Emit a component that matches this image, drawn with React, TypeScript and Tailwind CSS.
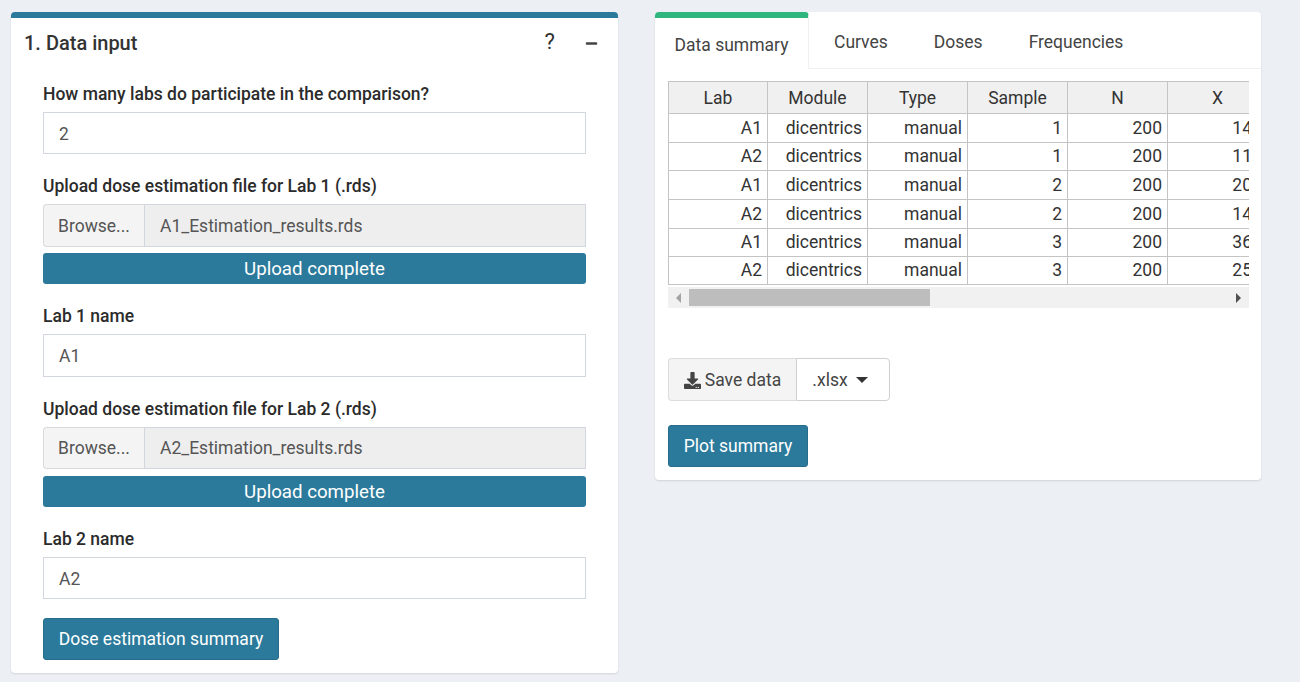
import { FaDownload, FaMinus } from 'react-icons/fa';

const rows = [
  ['A1', 'dicentrics', 'manual', '1', '200', '14'],
  ['A2', 'dicentrics', 'manual', '1', '200', '11'],
  ['A1', 'dicentrics', 'manual', '2', '200', '20'],
  ['A2', 'dicentrics', 'manual', '2', '200', '14'],
  ['A1', 'dicentrics', 'manual', '3', '200', '36'],
  ['A2', 'dicentrics', 'manual', '3', '200', '25'],
];

const columns = ['Lab', 'Module', 'Type', 'Sample', 'N', 'X'];
const rowHeights = ['h-[29px]', 'h-[28px]', 'h-[29px]', 'h-[29px]', 'h-[28px]', 'h-[28px]'];

function Label({ children }: { children: string }) {
  return <div className="mb-2 h-[22px] text-[17.5px] leading-[24px] font-medium text-[#2b2b2b]">{children}</div>;
}

function TextField({ value, height }: { value: string; height: string }) {
  return (
    <div className={`${height} flex items-center border border-[#d2d6de] bg-white px-[15px] pt-[2px] text-[17.5px] text-[#555]`}>
      {value}
    </div>
  );
}

function FileField({ name, height }: { name: string; height: string }) {
  return (
    <div className={`${height} flex text-[17.5px] text-[#555]`}>
      <div className="flex w-[101px] items-center justify-center rounded-l border border-r-0 border-[#d9d9d9] bg-[#f4f4f4] pt-px">
        Browse...
      </div>
      <div className="flex flex-1 items-center border border-[#d2d6de] bg-[#eeeeee] px-[15px] pt-px">{name}</div>
    </div>
  );
}

function Progress() {
  return (
    <div className="mt-[6px] flex h-[31px] items-center justify-center rounded-[3px] bg-[#2b7a9b] pt-px text-[18.7px] text-white">
      Upload complete
    </div>
  );
}

export default function App() {
  return (
    <div className="flex h-[682px] items-start gap-[37px] overflow-hidden bg-[#ecf0f5] pt-3 pl-[11px] font-['Roboto',sans-serif]">
      <section className="h-[661px] w-[607px] rounded-[4px] border-t-[6px] border-[#2b7a9b] bg-white shadow-[0_1px_2px_rgba(0,0,0,0.12)]">
        <header className="flex h-[50px] items-center justify-between pr-[20px] pl-[13px] text-[#333]">
          <h3 className="text-[20px] font-medium">1. Data input</h3>
          <div className="flex items-center gap-[30px]">
            <span className="pb-[4px] text-[22px]">?</span>
            <FaMinus className="text-[13px] text-[#444]" />
          </div>
        </header>

        <div className="px-[32px] pt-[14px]">
          <Label>How many labs do participate in the comparison?</Label>
          <TextField value="2" height="h-[42px]" />

          <div className="mt-5">
            <Label>Upload dose estimation file for Lab 1 (.rds)</Label>
            <FileField name="A1_Estimation_results.rds" height="h-[43px]" />
            <Progress />
          </div>

          <div className="mt-5">
            <Label>Lab 1 name</Label>
            <TextField value="A1" height="h-[43px]" />
          </div>

          <div className="mt-5">
            <Label>Upload dose estimation file for Lab 2 (.rds)</Label>
            <FileField name="A2_Estimation_results.rds" height="h-[42px]" />
            <div className="h-px" />
            <Progress />
          </div>

          <div className="mt-5">
            <Label>Lab 2 name</Label>
            <TextField value="A2" height="h-[42px]" />
          </div>

          <button className="mt-[19px] h-[42px] w-[236px] rounded-[3px] border border-[#266d8b] bg-[#2b7a9b] pt-px text-[17.5px] text-white">
            Dose estimation summary
          </button>
        </div>
      </section>

      <section className="h-[468px] w-[606px] rounded-[4px] bg-white shadow-[0_1px_2px_rgba(0,0,0,0.12)]">
        <nav className="flex h-[57px] border-b border-[#f0f0f0] text-[17.5px] text-[#444]">
          <div className="z-10 flex h-[57px] w-[154px] items-center justify-center rounded-t-[4px] border-t-[6px] border-r border-t-[#2fb67f] border-r-[#f0f0f0] bg-white pt-[3px]">
            Data summary
          </div>
          <div className="flex items-start gap-[46px] pt-[17px] pl-[25px]">
            <span>Curves</span>
            <span>Doses</span>
            <span>Frequencies</span>
          </div>
        </nav>

        <div className="pt-3 pl-[13px]">
          <div className="w-[581px] overflow-hidden">
            <table className="w-[599px] table-fixed border-collapse text-[17.5px] text-[#333]">
              <colgroup>
                <col className="w-[99px]" />
                <col className="w-[100px]" />
                <col className="w-[100px]" />
                <col className="w-[100px]" />
                <col className="w-[100px]" />
                <col className="w-[100px]" />
              </colgroup>
              <thead>
                <tr className="h-[32px] bg-[#f0f0f0]">
                  {columns.map((col) => (
                    <th key={col} className="border border-[#c4c4c4] p-0 pt-px text-center font-normal">
                      {col}
                    </th>
                  ))}
                </tr>
              </thead>
              <tbody>
                {rows.map((row, i) => (
                  <tr key={i} className={rowHeights[i]}>
                    {row.map((cell, j) => (
                      <td key={j} className="border border-[#c4c4c4] px-[5px] py-0 text-right last:pr-[15px]">
                        {cell}
                      </td>
                    ))}
                  </tr>
                ))}
              </tbody>
            </table>
          </div>
          <div className="mt-[2px] flex h-[21px] w-[581px] items-center bg-[#f1f1f1]">
            <svg className="mx-[7px] w-[7px]" viewBox="0 0 7 10" height="10">
              <path d="M6 0v10L1 5z" fill="#a3a3a3" />
            </svg>
            <div className="h-[17px] w-[241px] bg-[#bdbdbd]" />
            <svg className="mr-[7px] ml-auto w-[7px]" viewBox="0 0 7 10" height="10">
              <path d="M1 0v10l5-5z" fill="#505050" />
            </svg>
          </div>

          <div className="mt-[50px] flex h-[43px] text-[17.5px] text-[#444]">
            <div className="flex w-[128px] items-center justify-center gap-[4px] rounded-l-[4px] border border-r-0 border-[#dcdcdc] bg-[#f4f4f4] pt-px">
              <FaDownload className="text-[17px]" />
              Save data
            </div>
            <div className="flex w-[94px] items-center justify-center gap-[8px] rounded-r-[4px] border border-[#cfcfcf] bg-white pt-px pr-[6px]">
              .xlsx
              <svg width="12" height="6" viewBox="0 0 12 6">
                <path d="M0 0h12L6 6z" fill="#333" />
              </svg>
            </div>
          </div>

          <button className="mt-6 h-[42px] w-[140px] rounded-[3px] border border-[#266d8b] bg-[#2b7a9b] pt-px text-[17.5px] text-white">
            Plot summary
          </button>
        </div>
      </section>
    </div>
  );
}
